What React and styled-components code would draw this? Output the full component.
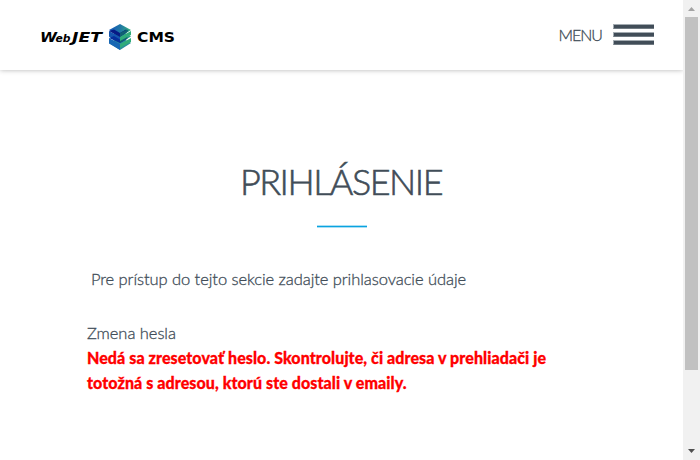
import React from "react";
import styled, { createGlobalStyle } from "styled-components";

const GlobalStyle = createGlobalStyle`
  * { box-sizing: border-box; }
  body { margin: 0; background: #fff; overflow: hidden; }
`;

const Window = styled.div`
  display: flex;
  width: 700px;
  height: 460px;
  overflow: hidden;
  color: #414d58;
  font-family: Lato, sans-serif;
`;

const Page = styled.div`
  width: 683px;
  height: 460px;
  overflow: hidden;
`;

const Header = styled.header`
  display: flex;
  align-items: center;
  justify-content: space-between;
  height: 70px;
  padding: 0 29px 0 40px;
  background: #fff;
  box-shadow: 0 0 5px rgba(0, 0, 0, 0.3);
`;

const Logo = styled.svg`
  display: block;
  width: 136px;
  height: 30px;
  margin-top: 7px;
`;

const MenuButton = styled.button`
  display: flex;
  align-items: center;
  gap: 11px;
  padding: 0;
  border: 0;
  background: none;
  color: inherit;
  font: 300 16px/24px Lato, sans-serif;
  letter-spacing: -1px;
  -webkit-text-stroke: 0.3px #414d58;
`;

const Burger = styled.span`
  display: flex;
  flex-direction: column;
  gap: 3px;
  width: 41px;
  margin-top: -1px;
`;

const Bar = styled.span`
  height: 5px;
  border: solid #a3abb1;
  border-width: 1px 0 1px 1px;
  border-bottom-color: #707a82;
  background: #414d58;
`;

const Main = styled.main`
  padding: 86px 87px 0;
`;

const Title = styled.h1`
  margin: 0;
  font-size: 36px;
  line-height: 50px;
  font-weight: 300;
  letter-spacing: -1.5px;
  text-indent: -1px;
  text-align: center;
  white-space: nowrap;
  -webkit-text-stroke: 0.6px #414d58;
`;

const Divider = styled.hr`
  width: 50px;
  height: 3px;
  margin: 19px auto 0;
  border: solid #aadff4;
  border-width: 1px 0;
  background: #0aa3e0;
`;

const Text = styled.p`
  margin: ${(p) => p.$margin};
  font-size: 16.5px;
  font-weight: 300;
  line-height: 24px;
  letter-spacing: ${(p) => p.$tracking};
  white-space: nowrap;
  -webkit-text-stroke: 0.3px #414d58;
`;

const ErrorLine = styled.strong`
  display: block;
  color: #f00;
  font-size: 16px;
  line-height: 25px;
  font-weight: 900;
  letter-spacing: ${(p) => p.$tracking};
  white-space: nowrap;
  -webkit-text-stroke: 0.3px #f00;
`;

const Scrollbar = styled.aside`
  display: flex;
  flex-direction: column;
  align-items: center;
  width: 17px;
  height: 460px;
  background: #f1f1f1;
`;

const Arrow = styled.svg`
  width: 17px;
  height: 17px;
`;

const Thumb = styled.div`
  width: 13px;
  height: 353px;
  margin-bottom: 73px;
  background: #c1c1c1;
`;

export default function App() {
  return (
    <>
      <GlobalStyle />
      <Window>
        <Page>
          <Header>
            <Logo viewBox="0 0 136 30" role="img" aria-label="WebJET CMS">
              <defs>
                <linearGradient id="layer" gradientUnits="userSpaceOnUse" x1="69" y1="8" x2="91" y2="12">
                  <stop offset="0" stopColor="#1457b8" />
                  <stop offset="0.45" stopColor="#1f76a6" />
                  <stop offset="1" stopColor="#38b878" />
                </linearGradient>
              </defs>
              <g fontFamily="'DejaVu Sans', sans-serif" fontWeight="700" fontSize="13.6">
                <text x="0" y="18" fontStyle="italic" textLength="17" lengthAdjust="spacingAndGlyphs">W</text>
                <text x="15.500" y="18" fontSize="10" fontStyle="italic" textLength="15" lengthAdjust="spacingAndGlyphs">eb</text>
                <text x="32" y="18" fontStyle="italic" textLength="30" lengthAdjust="spacingAndGlyphs">JET</text>
                <text x="97" y="18" textLength="38" lengthAdjust="spacingAndGlyphs">CMS</text>
              </g>
              <path d="m80 13 11 6-11 7-11-7z" fill="#2a8e9c" />
              <path d="M69 14v5.500l11 6.500v-6z" fill="#1767b4" />
              <path d="m80 6 11 6.500-11 6.500-11-6.500z" fill="#2a9b90" />
              <path d="M69 7v5.500l11 6.500v-6z" fill="#1556b0" />
              <path d="m80 0 11 6-11 7-11-7V6z" fill="url(#layer)" />
              <path d="m69 7 5-1.500 6 3.500 6-3.500 1 2.500-7 5z" fill="#071b86" />
              <path d="m69 14 5-2 6 3.500 5-3.500 2 3-7 4z" fill="#062f9c" />
              <path d="m80 9 7-3.500 1.500 1.500-8.500 6zM80 15.500l6-3.500 2 2-8 5z" fill="#116173" />
              <path d="m80 13 11-6v4l-11 6zM80 20l11-6v4l-11 6z" fill="#30ac7a" />
            </Logo>
            <MenuButton>
              MENU
              <Burger><Bar /><Bar /><Bar /></Burger>
            </MenuButton>
          </Header>
          <Main>
            <Title>PRIHLÁSENIE</Title>
            <Divider />
            <Text $margin="39px 0 0 4px" $tracking="-0.06px">Pre prístup do tejto sekcie zadajte prihlasovacie údaje</Text>
            <Text $margin="30px 0 0" $tracking="-0.04px">Zmena hesla</Text>
            <ErrorLine $tracking="0.08px">Nedá sa zresetovať heslo. Skontrolujte, či adresa v prehliadači je</ErrorLine>
            <ErrorLine $tracking="0.08px">totožná s adresou, ktorú ste dostali v emaily.</ErrorLine>
          </Main>
        </Page>
        <Scrollbar>
          <Arrow viewBox="0 0 17 17"><path d="M5 11h7L8.5 7z" fill="#a3a3a3" /></Arrow>
          <Thumb />
          <Arrow viewBox="0 0 17 17"><path d="M5 6h7l-3.5 4z" fill="#505050" /></Arrow>
        </Scrollbar>
      </Window>
    </>
  );
}
